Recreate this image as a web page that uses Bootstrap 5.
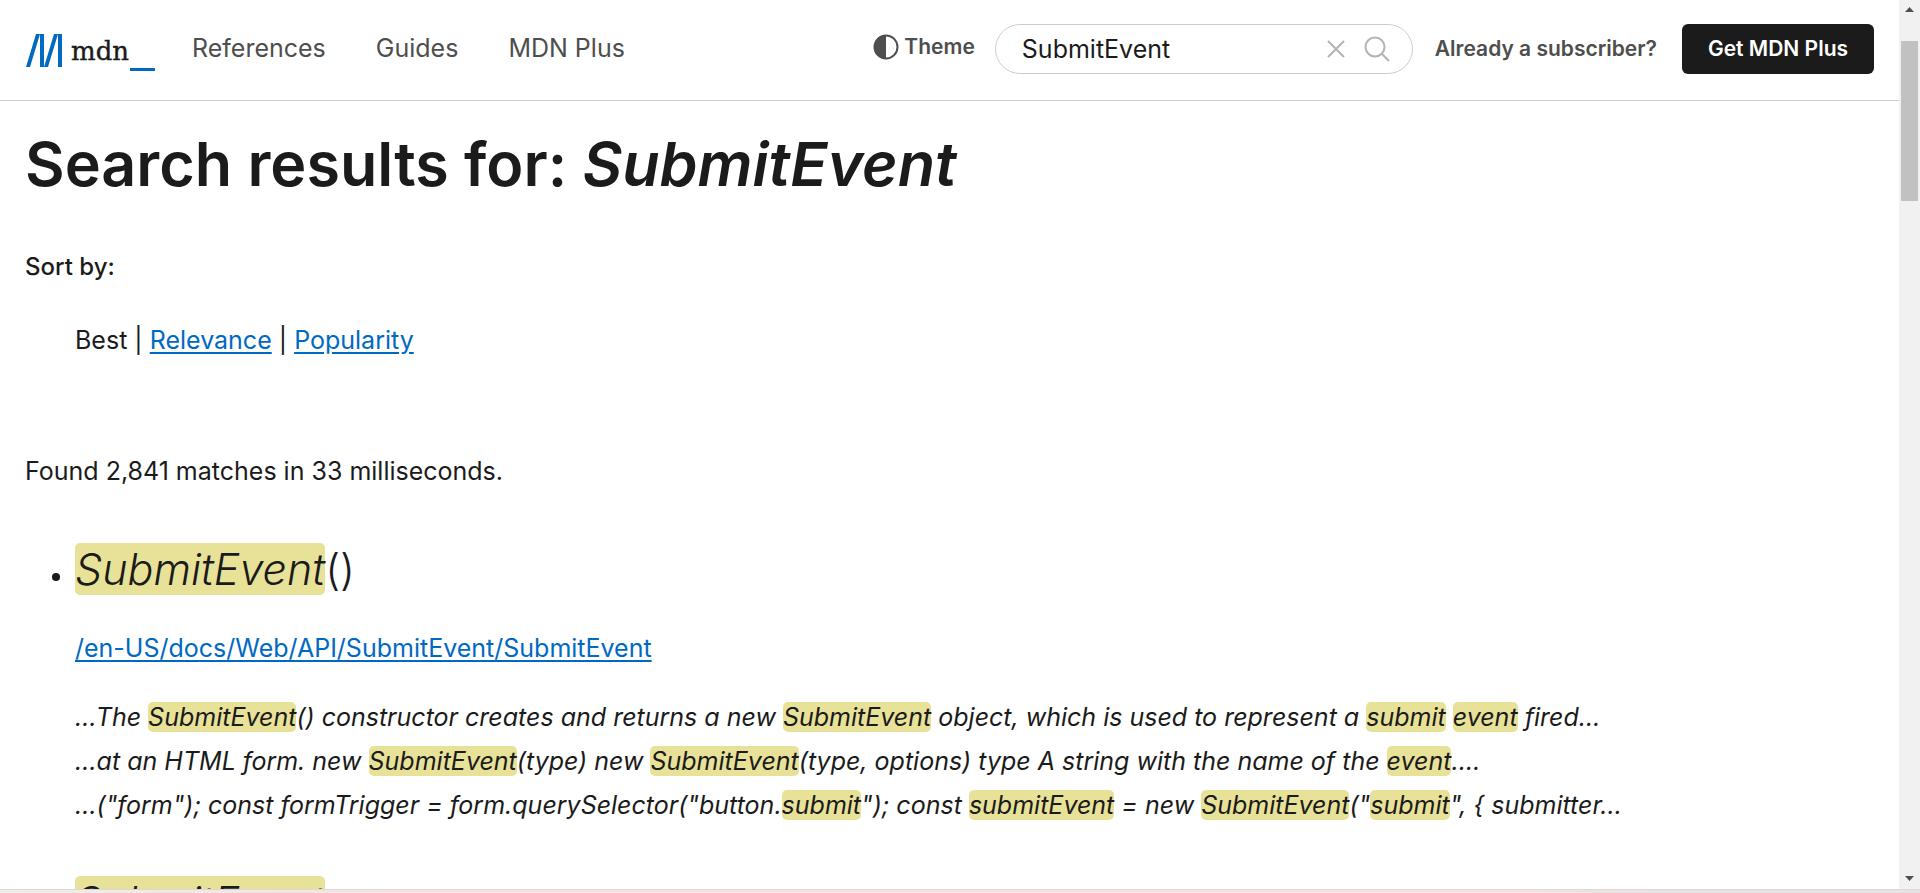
<!DOCTYPE html>
<html lang="en-US">
<head>
<meta charset="utf-8">
<meta name="viewport" content="width=device-width, initial-scale=1">
<title>Search results for: SubmitEvent | MDN</title>
<link href="https://cdn.jsdelivr.net/npm/bootstrap@5.3.0/dist/css/bootstrap.min.css" rel="stylesheet">
<style>
body { font: 400 25px/44px Inter, "Liberation Sans", sans-serif; color: #1b1b1b; background: #fff; }
a { color: #0069c2; text-underline-offset: 3px; }
.site-header { padding: 24px 25px 26px; border-bottom: 1px solid #cdcdcd; line-height: 30px; }
.logo { width: 130px; height: 50px; margin-right: 37px; }
.main-links { gap: 50px; padding-bottom: 2px; }
.main-links a { color: #4e4e4e; text-decoration: none; }
.theme-btn { color: #4e4e4e; font-size: 21px; font-weight: 600; gap: 5px; margin-right: 20px; line-height: 26px; }
.search-box { width: 418px; height: 50px; border: 1px solid #cdcdcd; border-radius: 25px; padding: 0 22px 0 26px; margin-right: 22px; }
.search-box input { border: 0; outline: 0; background: none; min-width: 0; color: #1b1b1b; padding: 0; }
.search-box button { line-height: 0; }
.search-box .clear-btn { margin-right: 15px; }
.account-link { color: #4e4e4e; font-size: 21px; font-weight: 600; text-decoration: none; margin-right: 25px; }
.plus-btn { width: 192px; height: 50px; background: #1b1b1b; color: #fff; font-size: 21px; font-weight: 600; border-radius: 6px; text-decoration: none; }
.results { padding: 25px; }
.results h1 { font-size: 61px; font-weight: 600; line-height: 76px; margin-bottom: 43px; }
.sort-label { font-size: 24px; font-weight: 500; margin-bottom: 29px; }
.sort-list { padding-left: 50px; margin-bottom: 87px; }
.found-line { margin-bottom: 49px; }
.result-list { padding-left: 50px; margin: 0; }
.result-list li { margin-bottom: 48px; }
.result-list h2 { font-size: 43px; font-weight: 300; line-height: 54px; margin-bottom: 30px; }
.result-list p { margin-bottom: 25px; }
.result-list mark { background: #e8e299; color: #1b1b1b; padding: 0; border-radius: 5px; }
.scroll-track { width: 21px; background: #f1f1f1; padding: 7px 2px 8px; }
.scroll-thumb { height: 160px; background: #c1c1c1; margin-top: 29px; }
.bottom-edge { height: 4px; border-top: 1px solid #dcd6d8; background: linear-gradient(90deg, #eeeee6, #f6e2e4 20%, #f6e2e0 80%, #e6e2e6 88%); }
</style>
</head>
<body class="vh-100 d-flex flex-column overflow-hidden">
<div class="d-flex flex-grow-1 overflow-hidden">
  <div class="flex-grow-1 overflow-hidden">
    <header class="site-header d-flex align-items-center">
      <a class="logo flex-shrink-0" href="#" aria-label="MDN">
        <svg class="d-block" width="130" height="50" viewBox="0 0 130 50">
          <path fill="#0069c2" d="M11 10h4L5 43H1zM15 10h4v33h-4zM29 10h4L23 43h-4zM33 10h4v33h-4zM105 44h25v3h-25z"/>
          <text x="46" y="36" font-family="DejaVu Serif, serif" font-size="26" fill="#1b1b1b" stroke="#1b1b1b" stroke-width=".4">mdn</text>
        </svg>
      </a>
      <nav class="main-links d-flex text-nowrap">
        <a href="#">References</a><a href="#">Guides</a><a href="#">MDN Plus</a>
      </nav>
      <button class="theme-btn btn border-0 p-0 pb-1 ms-auto d-flex align-items-center" type="button">
        <svg width="26" height="26" viewBox="0 0 26 26"><circle cx="13" cy="13" r="11.500" fill="none" stroke="#4e4e4e" stroke-width="2"/><path fill="#4e4e4e" d="M13 1a12 12 0 0 0 0 24z"/></svg>
        Theme
      </button>
      <form class="search-box d-flex align-items-center">
        <input class="flex-grow-1" type="text" value="SubmitEvent" aria-label="Search MDN">
        <button class="clear-btn btn border-0 p-0" type="button" aria-label="Clear">
          <svg width="26" height="26" viewBox="0 0 26 26"><path d="M5 5l16 16M21 5L5 21" fill="none" stroke="#b3b3b3" stroke-width="2"/></svg>
        </button>
        <button class="btn border-0 p-0" type="button" aria-label="Search">
          <svg width="26" height="26" viewBox="0 0 26 26"><circle cx="11" cy="11" r="9.500" fill="none" stroke="#b3b3b3" stroke-width="2"/><path d="M18 18l7 7" stroke="#b3b3b3" stroke-width="2"/></svg>
        </button>
      </form>
      <a class="account-link text-nowrap" href="#">Already a subscriber?</a>
      <a class="plus-btn d-flex align-items-center justify-content-center text-nowrap" href="#">Get MDN Plus</a>
    </header>
    <main class="results">
      <h1>Search results for: <em>SubmitEvent</em></h1>
      <div class="sort-label">Sort by:</div>
      <div class="sort-list">Best | <a href="#">Relevance</a> | <a href="#">Popularity</a></div>
      <p class="found-line">Found 2,841 matches in 33 milliseconds.</p>
      <ul class="result-list">
        <li>
          <h2><mark><em>SubmitEvent</em></mark>()</h2>
          <p><a href="#">/en-US/docs/Web/API/SubmitEvent/SubmitEvent</a></p>
          <div class="fst-italic">
            …The <mark>SubmitEvent</mark>() constructor creates and returns a new <mark>SubmitEvent</mark> object, which is used to represent a <mark>submit</mark> <mark>event</mark> fired…<br>
            …at an HTML form. new <mark>SubmitEvent</mark>(type) new <mark>SubmitEvent</mark>(type, options) type A string with the name of the <mark>event</mark>.…<br>
            …("form"); const formTrigger = form.querySelector("button.<mark>submit</mark>"); const <mark>submitEvent</mark> = new <mark>SubmitEvent</mark>("<mark>submit</mark>", { submitter…
          </div>
        </li>
        <li><h2><mark><em>SubmitEvent</em></mark></h2></li>
      </ul>
    </main>
  </div>
  <div class="scroll-track flex-shrink-0 d-flex flex-column" aria-hidden="true">
    <svg class="mx-auto" width="9" height="5" viewBox="0 0 9 5"><path fill="#505050" d="M0 5l4.500-5L9 5z"/></svg>
    <div class="scroll-thumb"></div>
    <svg class="mx-auto mt-auto" width="9" height="5" viewBox="0 0 9 5"><path fill="#505050" d="M0 0h9L4.500 5z"/></svg>
  </div>
</div>
<div class="bottom-edge flex-shrink-0"></div>
<script src="https://cdn.jsdelivr.net/npm/bootstrap@5.3.0/dist/js/bootstrap.bundle.min.js"></script>
</body>
</html>
